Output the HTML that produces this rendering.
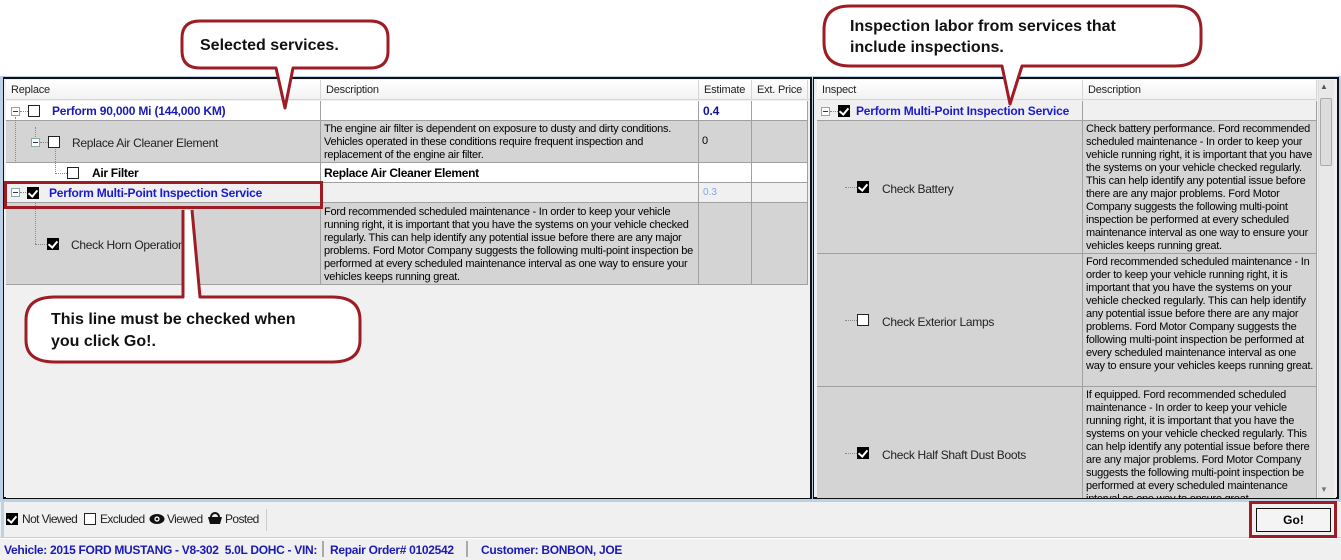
<!DOCTYPE html>
<html><head><meta charset="utf-8"><style>
*{box-sizing:border-box;margin:0;padding:0}
body{width:1341px;height:560px;position:relative;overflow:hidden;background:#fff;font-family:"Liberation Sans",sans-serif;font-size:11px;color:#000}
.a{position:absolute}
.hdr{background:linear-gradient(#fff,#f2f2f2);border-bottom:1px solid #d5d5d5;height:20px}
.hc{position:absolute;top:0;height:20px;line-height:20px;padding-left:5px;border-right:1px solid #d5d5d5;font-size:11px;color:#222;letter-spacing:-0.2px}
.cell{position:absolute;border-right:1px solid #a0a0a0;border-bottom:1px solid #a0a0a0}
.desc{font-size:11px;line-height:13px;padding:2px 2px 0 3px;letter-spacing:-0.25px}
.cb{position:absolute;width:12px;height:12px;border:1px solid #222;background:#fff}
.ck{position:absolute;width:12px;height:12px;background:#000}
.ck:after{content:"";position:absolute;left:3px;top:1px;width:4px;height:7px;border:solid #fff;border-width:0 2px 2px 0;transform:rotate(40deg)}
.exp{position:absolute;width:9px;height:9px;border:1px solid #8aa;background:#fff}
.exp:after{content:"";position:absolute;left:1px;top:3px;width:5px;height:1px;background:#336}
.blue{color:#1a1ab4;font-weight:bold;font-size:12px;letter-spacing:-0.2px}
.lbl{position:absolute;font-size:12px;color:#222;letter-spacing:-0.3px}
.dl{position:absolute;border-left:1px dotted #888}
.dh{position:absolute;border-top:1px dotted #888}
</style></head><body>
<div class="a" style="left:0;top:76px;width:1341px;height:426px;background:#bcd0e6"></div>
<div class="a" style="left:3px;top:77px;width:809px;height:422px;border:2px solid #111;background:#f0f0f0;border-left-width:1px"></div>
<div class="a" style="left:6px;top:80px;width:804px;height:418px;background:#f0f0f0;overflow:hidden">
 <div class="hdr a" style="left:0;top:0;width:804px">
  <div class="hc" style="left:0;width:315px">Replace</div>
  <div class="hc" style="left:315px;width:378px">Description</div>
  <div class="hc" style="left:693px;width:53px">Estimate</div>
  <div class="hc" style="left:746px;width:56px">Ext. Price</div>
 </div>
 <div class="cell" style="left:0;top:21px;width:315px;height:20px;background:#fff"></div>
 <div class="cell" style="left:315px;top:21px;width:378px;height:20px;background:#fff"></div>
 <div class="cell" style="left:693px;top:21px;width:53px;height:20px;background:#fff"></div>
 <div class="cell" style="left:746px;top:21px;width:56px;height:20px;background:#fff"></div>
 <div class="exp" style="left:5px;top:27px"></div><div class="dh" style="left:14px;top:31px;width:10px"></div>
 <div class="cb" style="left:22px;top:25px"></div>
 <div class="a blue" style="left:46px;top:24px">Perform 90,000 Mi (144,000 KM)</div>
 <div class="a blue" style="left:697px;top:24px;color:#12129a">0.4</div>
 <div class="cell" style="left:0;top:41px;width:315px;height:42px;background:#d4d4d4"></div>
 <div class="cell desc" style="left:315px;top:41px;width:378px;height:42px;background:#d4d4d4">The engine air filter is dependent on exposure to dusty and dirty conditions. Vehicles operated in these conditions require frequent inspection and replacement of the engine air filter.</div>
 <div class="cell" style="left:693px;top:41px;width:53px;height:42px;background:#d4d4d4;padding:14px 0 0 3px">0</div>
 <div class="cell" style="left:746px;top:41px;width:56px;height:42px;background:#d4d4d4"></div>
 <div class="dl" style="left:9px;top:37px;height:68px"></div>
 <div class="dl" style="left:29px;top:47px;height:12px"></div>
 <div class="exp" style="left:25px;top:58px"></div><div class="dh" style="left:34px;top:62px;width:8px"></div>
 <div class="cb" style="left:42px;top:56px"></div>
 <div class="lbl" style="left:66px;top:56px">Replace Air Cleaner Element</div>
 <div class="cell" style="left:0;top:83px;width:315px;height:20px;background:#fff"></div>
 <div class="cell" style="left:315px;top:83px;width:378px;height:20px;background:#fff"></div>
 <div class="cell" style="left:693px;top:83px;width:53px;height:20px;background:#fff"></div>
 <div class="cell" style="left:746px;top:83px;width:56px;height:20px;background:#fff"></div>
 <div class="dl" style="left:49px;top:69px;height:25px"></div><div class="dh" style="left:49px;top:93px;width:12px"></div>
 <div class="cb" style="left:61px;top:87px"></div>
 <div class="a" style="left:86px;top:86px;font-size:12px;font-weight:bold;letter-spacing:-0.3px">Air Filter</div>
 <div class="a" style="left:318px;top:86px;font-size:12px;font-weight:bold;letter-spacing:-0.3px">Replace Air Cleaner Element</div>
 <div class="dl" style="left:9px;top:103px;height:5px"></div>
 <div class="cell" style="left:0;top:103px;width:315px;height:20px;background:#f0f0f0"></div>
 <div class="cell" style="left:315px;top:103px;width:378px;height:20px;background:#f0f0f0"></div>
 <div class="cell" style="left:693px;top:103px;width:53px;height:20px;background:#f0f0f0"></div>
 <div class="cell" style="left:746px;top:103px;width:56px;height:20px;background:#f0f0f0"></div>
 <div class="exp" style="left:5px;top:108px"></div><div class="dh" style="left:14px;top:112px;width:8px"></div>
 <div class="ck" style="left:21px;top:107px"></div>
 <div class="a blue" style="left:43px;top:106px;color:#1a1ad0">Perform Multi-Point Inspection Service</div>
 <div class="a" style="left:697px;top:107px;color:#7aa8f0;font-size:10px">0.3</div>
 <div class="cell" style="left:0;top:123px;width:315px;height:82px;background:#d4d4d4"></div>
 <div class="cell desc" style="left:315px;top:123px;width:378px;height:82px;background:#d4d4d4;padding-top:3px">Ford recommended scheduled maintenance - In order to keep your vehicle running right, it is important that you have the systems on your vehicle checked regularly. This can help identify any potential issue before there are any major problems. Ford Motor Company suggests the following multi-point inspection be performed at every scheduled maintenance interval as one way to ensure your vehicles keeps running great.</div>
 <div class="cell" style="left:693px;top:123px;width:53px;height:82px;background:#d4d4d4"></div>
 <div class="cell" style="left:746px;top:123px;width:56px;height:82px;background:#d4d4d4"></div>
 <div class="dl" style="left:29px;top:123px;height:41px"></div><div class="dh" style="left:29px;top:164px;width:12px"></div>
 <div class="ck" style="left:41px;top:158px"></div>
 <div class="lbl" style="left:65px;top:158px">Check Horn Operation</div>
</div>
<div class="a" style="left:813px;top:77px;width:526px;height:422px;border:2px solid #111;border-left-width:1px;background:#f0f0f0"></div>
<div class="a" style="left:817px;top:80px;width:519px;height:418px;background:#f0f0f0;overflow:hidden">
 <div class="hdr a" style="left:0;top:0;width:500px">
  <div class="hc" style="left:0;width:266px">Inspect</div>
  <div class="hc" style="left:266px;width:234px">Description</div>
 </div>
 <div class="a" style="left:501px;top:0;width:16px;height:418px;background:#e8e8e8;border-left:1px solid #ddd"></div>
 <div class="a" style="left:503px;top:2px;color:#555;font-size:8px">▲</div>
 <div class="a" style="left:503px;top:18px;width:12px;height:68px;background:#dcdcdc;border:1px solid #aaa;border-radius:2px"></div>
 <div class="a" style="left:503px;top:405px;color:#777;font-size:8px">▼</div>
 <div class="cell" style="left:0;top:21px;width:266px;height:20px;background:#f0f0f0"></div>
 <div class="cell" style="left:266px;top:21px;width:234px;height:20px;background:#f0f0f0"></div>
 <div class="exp" style="left:4px;top:27px"></div><div class="dh" style="left:13px;top:31px;width:10px"></div>
 <div class="ck" style="left:21px;top:25px"></div>
 <div class="a blue" style="left:39px;top:24px;color:#1a1ad0">Perform Multi-Point Inspection Service</div>
 <div class="dl" style="left:28px;top:41px;height:377px"></div>
 <div class="cell" style="left:0;top:41px;width:266px;height:133px;background:#d4d4d4"></div>
 <div class="cell desc" style="left:266px;top:41px;width:234px;height:133px;background:#d4d4d4">Check battery performance. Ford recommended scheduled maintenance - In order to keep your vehicle running right, it is important that you have the systems on your vehicle checked regularly. This can help identify any potential issue before there are any major problems. Ford Motor Company suggests the following multi-point inspection be performed at every scheduled maintenance interval as one way to ensure your vehicles keeps running great.</div>
 <div class="dh" style="left:28px;top:107px;width:12px"></div>
 <div class="ck" style="left:40px;top:101px"></div>
 <div class="lbl" style="left:65px;top:102px">Check Battery</div>
 <div class="cell" style="left:0;top:174px;width:266px;height:133px;background:#d4d4d4"></div>
 <div class="cell desc" style="left:266px;top:174px;width:234px;height:133px;background:#d4d4d4">Ford recommended scheduled maintenance - In order to keep your vehicle running right, it is important that you have the systems on your vehicle checked regularly. This can help identify any potential issue before there are any major problems. Ford Motor Company suggests the following multi-point inspection be performed at every scheduled maintenance interval as one way to ensure your vehicles keeps running great.</div>
 <div class="dh" style="left:28px;top:240px;width:12px"></div>
 <div class="cb" style="left:40px;top:234px"></div>
 <div class="lbl" style="left:65px;top:235px">Check Exterior Lamps</div>
 <div class="cell" style="left:0;top:307px;width:266px;height:133px;background:#d4d4d4"></div>
 <div class="cell desc" style="left:266px;top:307px;width:234px;height:133px;background:#d4d4d4">If equipped. Ford recommended scheduled maintenance - In order to keep your vehicle running right, it is important that you have the systems on your vehicle checked regularly. This can help identify any potential issue before there are any major problems. Ford Motor Company suggests the following multi-point inspection be performed at every scheduled maintenance interval as one way to ensure great.</div>
 <div class="dh" style="left:28px;top:373px;width:12px"></div>
 <div class="ck" style="left:40px;top:367px"></div>
 <div class="lbl" style="left:65px;top:368px">Check Half Shaft Dust Boots</div>
</div>
<div class="a" style="left:0;top:502px;width:1341px;height:36px;background:#f0f0f0;border-bottom:1px solid #bcd0e6"></div>
<div class="a" style="left:1px;top:502px;width:3px;height:36px;background:#bcd0e6"></div>
<div class="ck" style="left:6px;top:513px"></div>
<div class="lbl" style="left:22px;top:512px;letter-spacing:-0.6px">Not Viewed</div>
<div class="cb" style="left:84px;top:513px"></div>
<div class="lbl" style="left:100px;top:512px;letter-spacing:-0.6px">Excluded</div>
<svg class="a" style="left:149px;top:513px" width="16" height="12"><ellipse cx="8" cy="6" rx="7.5" ry="5" fill="#111"/><circle cx="8" cy="6" r="2.6" fill="#fff"/><circle cx="8" cy="6" r="1.3" fill="#111"/></svg>
<div class="lbl" style="left:167px;top:512px;letter-spacing:-0.6px">Viewed</div>
<svg class="a" style="left:207px;top:511px" width="16" height="14"><path d="M4 6 A4 4 0 0 1 12 6" stroke="#111" stroke-width="2" fill="none"/><path d="M1 6 H15 L13 13 H3 Z" fill="#111"/></svg>
<div class="lbl" style="left:225px;top:512px;letter-spacing:-0.6px">Posted</div>
<div class="a" style="left:266px;top:509px;width:1px;height:22px;background:#ccc"></div>
<div class="a" style="left:1256px;top:508px;width:75px;height:24px;border:1px solid #111;background:#f4f4f4;text-align:center;line-height:22px;font-weight:bold;font-size:12px">Go!</div>
<div class="a" style="left:1249px;top:501px;width:88px;height:37px;border:3px solid #9e1c24"></div>
<div class="a" style="left:0;top:539px;width:1341px;height:21px;background:#f0f0f0"></div>
<div class="a" style="left:4px;top:543px;font-size:12px;font-weight:bold;color:#1a1ab4;letter-spacing:-0.3px">Vehicle: 2015 FORD MUSTANG - V8-302&nbsp; 5.0L DOHC - VIN:</div>
<div class="a" style="left:322px;top:541px;width:2px;height:16px;background:#aaa"></div>
<div class="a" style="left:330px;top:543px;font-size:12px;font-weight:bold;color:#1a1ab4;letter-spacing:-0.3px">Repair Order# 0102542</div>
<div class="a" style="left:466px;top:541px;width:2px;height:16px;background:#aaa"></div>
<div class="a" style="left:481px;top:543px;font-size:12px;font-weight:bold;color:#1a1ab4;letter-spacing:-0.3px">Customer: BONBON, JOE</div>
<svg class="a" style="left:0;top:0" width="1341" height="560">
 <g fill="#fff" stroke="#9e1c24" stroke-width="3" stroke-linejoin="round">
  <path d="M200 21 H370 Q388 21 388 38 V51 Q388 68 370 68 H293 L285 108 L276 68 H200 Q182 68 182 51 V38 Q182 21 200 21 Z"/>
  <path d="M850 6 H1175 Q1201 6 1201 30 V42 Q1201 66 1175 66 H1022 L1010 104 L1002 66 H850 Q824 66 824 42 V30 Q824 6 850 6 Z"/>
  <path d="M183 210 L183 297 H55 Q26 297 26 320 V340 Q26 362 55 362 H332 Q360 362 360 340 V320 Q360 297 332 297 H200 L192 210"/>
 </g>
 <rect x="5.5" y="182.5" width="316" height="25" fill="none" stroke="#9e1c24" stroke-width="3"/>
 <g font-family="Liberation Sans, sans-serif" font-weight="bold" font-size="16" fill="#111">
  <text x="200" y="50">Selected services.</text>
  <text x="850" y="31">Inspection labor from services that</text>
  <text x="850" y="52">include inspections.</text>
  <text x="51" y="324">This line must be checked when</text>
  <text x="51" y="346">you click Go!.</text>
 </g>
</svg>
</body></html>
